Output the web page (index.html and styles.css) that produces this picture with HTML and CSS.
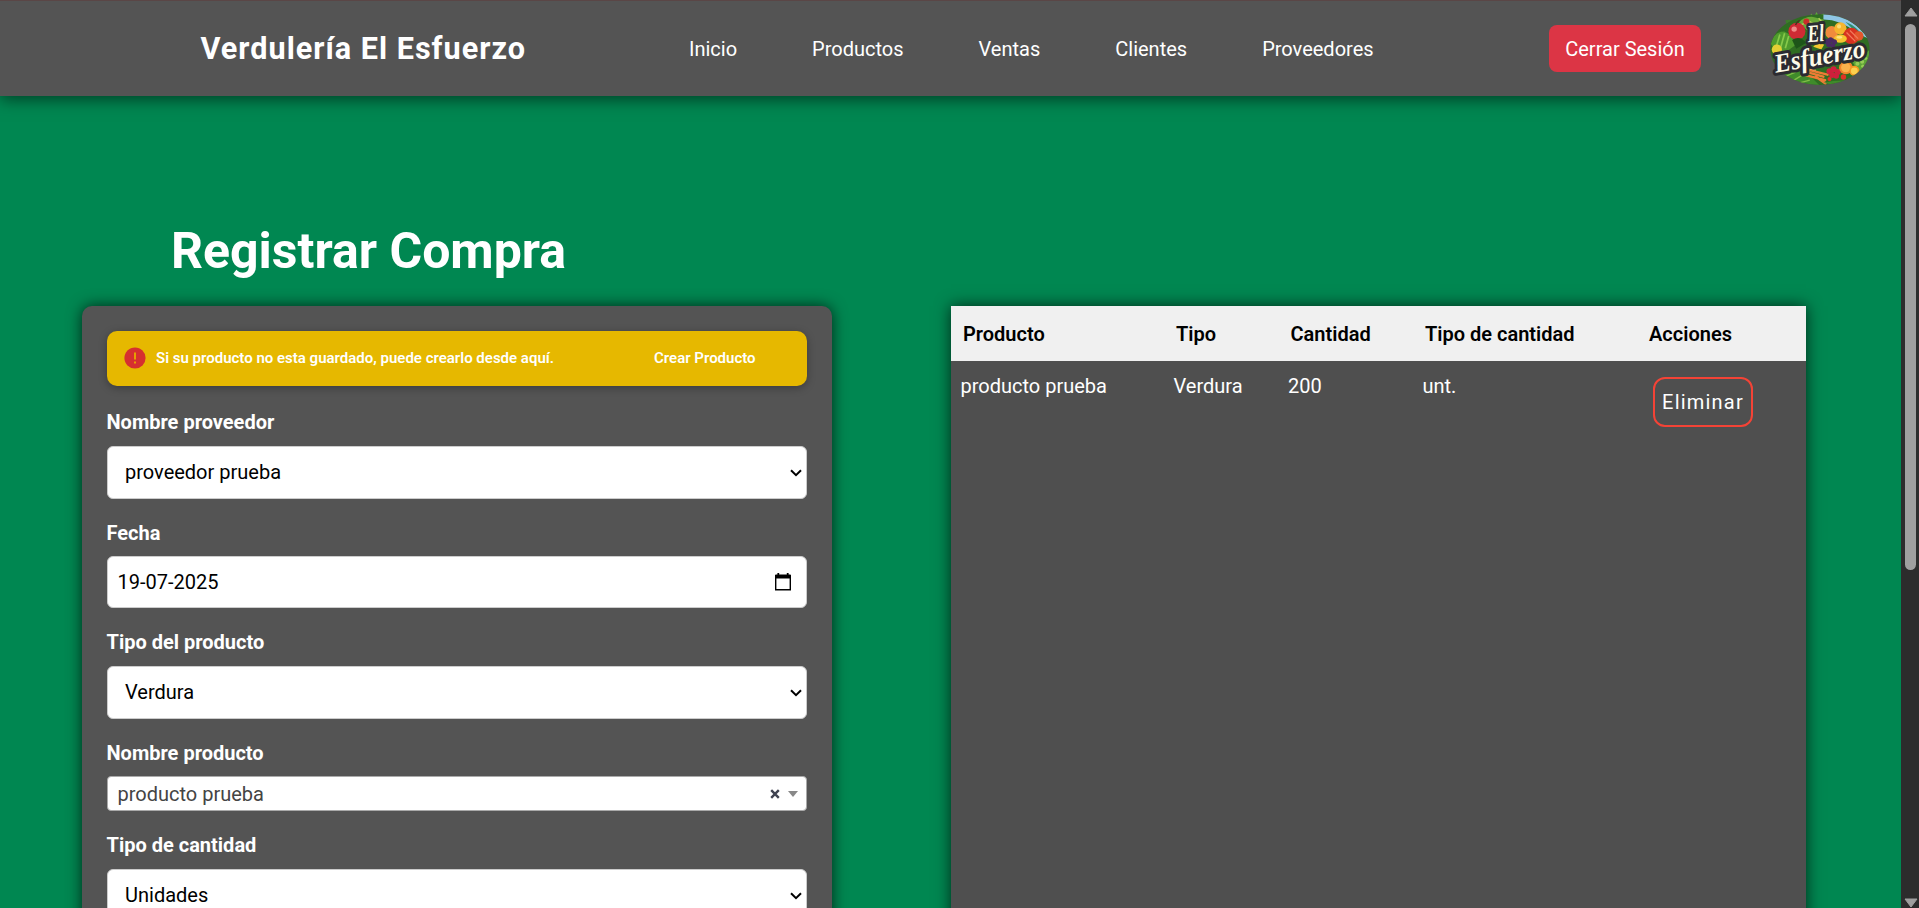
FILE: index.html
```html
<!DOCTYPE html>
<html lang="es">
<head>
<meta charset="utf-8">
<title>Verdulería El Esfuerzo</title>
<link rel="stylesheet" href="styles.css">
</head>
<body>
<div class="page">
  <header class="navbar">
    <div class="brand">Verdulería El Esfuerzo</div>
    <nav class="menu">
      <a>Inicio</a><a>Productos</a><a>Ventas</a><a>Clientes</a><a>Proveedores</a>
    </nav>
    <button class="logout">Cerrar Sesión</button>
    <svg class="logo" viewBox="30 35 300 220">
      <defs>
        <clipPath id="oval"><ellipse cx="180" cy="148" rx="146" ry="104"/></clipPath>
      </defs>
      <path d="M148 60 L154 42 L162 52 L170 38 L176 50 L190 42 L194 62Z" fill="#5fa83a"/>
      <path d="M78 62 Q95 56 108 70 L90 82 Q80 76 78 62Z" fill="#3d7d2c"/>
      <g clip-path="url(#oval)">
        <rect x="30" y="35" width="300" height="220" fill="#2f6d22"/>
        <path d="M190 40 Q270 45 320 115 L290 100 Q240 60 190 60Z" fill="#8fc6e6"/>
        <path d="M255 66 Q290 80 312 115 L280 92Z" fill="#2d8f6a"/>
        <path d="M35 130 Q45 95 75 95 Q100 105 108 135 L60 170Z" fill="#4f9b2d"/>
        <path d="M48 150 L62 104 M62 150 L76 100 M78 144 L88 108" stroke="#86c94a" stroke-width="5"/>
        <path d="M118 68 Q135 50 160 52 L190 60 L196 80 L140 90Z" fill="#69a938"/>
        <path d="M125 75 L150 66 M140 60 L160 72 M176 56 L188 70" stroke="#b4d45c" stroke-width="4"/>
        <circle cx="53" cy="148" r="15" fill="#e4cf34"/>
        <circle cx="140" cy="66" r="9" fill="#c92e2b"/>
        <circle cx="112" cy="94" r="25" fill="#cf2b34"/>
        <circle cx="104" cy="88" r="8" fill="#f08a86"/>
        <path d="M108 76 Q112 66 120 62" stroke="#49351f" stroke-width="4" fill="none"/>
        <path d="M98 120 Q120 105 140 128 L110 146Z" fill="#1d5419"/>
        <circle cx="214" cy="98" r="19" fill="#f08b3c"/>
        <circle cx="240" cy="86" r="18" fill="#f5b52e"/>
        <circle cx="236" cy="80" r="6" fill="#fbdc74"/>
        <circle cx="272" cy="108" r="24" fill="#d8321f"/>
        <circle cx="294" cy="108" r="14" fill="#e4562b"/>
        <path d="M258 98 L284 124 M268 92 L292 116" stroke="#f2785a" stroke-width="4"/>
        <ellipse cx="240" cy="116" rx="19" ry="12" fill="#f6c431"/>
        <ellipse cx="237" cy="112" rx="9" ry="4" fill="#fbe382"/>
        <g fill="#4a2a63"><circle cx="198" cy="124" r="8"/><circle cx="211" cy="120" r="8"/><circle cx="222" cy="126" r="8"/><circle cx="206" cy="133" r="8"/><circle cx="218" cy="137" r="7"/></g>
        <path d="M160 140 Q178 122 192 134 L184 148Z" fill="#f3c62e"/>
        <path d="M55 215 Q90 200 140 215 L180 255 H70Z" fill="#3f8b2a"/>
        <path d="M80 226 L110 214 M100 240 L130 222 M120 246 L150 238" stroke="#82bd48" stroke-width="4"/>
        <path d="M134 212 L190 228 M140 224 L195 238 M146 208 L202 222 M168 228 L196 248" stroke="#ee7b35" stroke-width="7" stroke-linecap="round"/>
        <path d="M132 209 L150 211 M150 206 L168 209" stroke="#f8a861" stroke-width="3"/>
        <g fill="#cf1f3c"><circle cx="208" cy="212" r="9"/><circle cx="220" cy="206" r="9"/><circle cx="232" cy="214" r="9"/><circle cx="216" cy="223" r="9"/><circle cx="228" cy="226" r="8"/></g>
        <circle cx="249" cy="229" r="8" fill="#e03226"/><circle cx="208" cy="235" r="6" fill="#e03226"/>
        <path d="M274 182 Q310 166 324 150 V210 H290Z" fill="#5da337"/>
        <g fill="#96cb55"><circle cx="290" cy="190" r="6"/><circle cx="304" cy="184" r="6"/><circle cx="314" cy="174" r="5"/><circle cx="306" cy="197" r="5"/></g>
        <path d="M190 246 Q230 236 270 240 L240 256Z" fill="#3f8b2a"/>
        <circle cx="256" cy="201" r="20" fill="#f2852b"/><circle cx="256" cy="201" r="14" fill="#fbb04b"/>
        <circle cx="281" cy="211" r="15" fill="#f59a23"/><circle cx="281" cy="211" r="10" fill="#fcd04e"/>
      </g>
      <g class="logo-text">
        <text x="143" y="125" font-size="72" textLength="50" lengthAdjust="spacingAndGlyphs" transform="rotate(-5 165 110)">El</text>
        <text x="45" y="193" font-size="78" textLength="270" lengthAdjust="spacingAndGlyphs" transform="rotate(-10 180 175)">Esfuerzo</text>
      </g>
    </svg>
  </header>

  <main class="content">
    <section class="left">
      <h1>Registrar Compra</h1>
      <form class="panel form">
        <div class="alert">
          <svg class="alert-icon" viewBox="0 0 22 22"><circle cx="11" cy="11" r="10.6" fill="#d6302f"/><path d="M11 5.6V12.4M11 14.4V16.6" stroke="#e6a000" stroke-width="2"/></svg>
          <span class="alert-text">Si su producto no esta guardado, puede crearlo desde aquí.</span>
          <a class="alert-link">Crear Producto</a>
        </div>
        <div class="field">
          <label>Nombre proveedor</label>
          <div class="control select"><span>proveedor prueba</span><svg class="chevron" viewBox="0 0 12 8"><path d="M1 1.2L6 6.2L11 1.2"/></svg></div>
        </div>
        <div class="field tight">
          <label>Fecha</label>
          <div class="control date"><span>19-07-2025</span><svg class="calendar" viewBox="0 0 16 18"><path d="M.7 3.5H15.3V16.8H.7Z" fill="none" stroke="#000" stroke-width="1.4"/><path d="M0 2.2Q0 1.4 1 1.4H2.4V0H4.2V1.4H11.8V0H13.6V1.4H15Q16 1.4 16 2.2V5.4H0Z"/></svg></div>
        </div>
        <div class="field">
          <label>Tipo del producto</label>
          <div class="control select"><span>Verdura</span><svg class="chevron" viewBox="0 0 12 8"><path d="M1 1.2L6 6.2L11 1.2"/></svg></div>
        </div>
        <div class="field tight">
          <label>Nombre producto</label>
          <div class="control search"><span>producto prueba</span><svg class="clear" viewBox="0 0 10 10"><path d="M1.2 1.2L8.8 8.8M8.8 1.2L1.2 8.8"/></svg><i class="caret"></i></div>
        </div>
        <div class="field">
          <label>Tipo de cantidad</label>
          <div class="control select"><span>Unidades</span><svg class="chevron" viewBox="0 0 12 8"><path d="M1 1.2L6 6.2L11 1.2"/></svg></div>
        </div>
      </form>
    </section>

    <section class="panel list">
      <div class="row head">
        <span>Producto</span><span>Tipo</span><span>Cantidad</span><span>Tipo de cantidad</span><span>Acciones</span>
      </div>
      <div class="row">
        <span>producto prueba</span><span>Verdura</span><span>200</span><span>unt.</span><button class="delete">Eliminar</button>
      </div>
    </section>
  </main>
</div>
<aside class="scrollbar">
  <svg class="arrow" viewBox="0 0 14 10"><path d="M7 1L13 9H1Z"/></svg>
  <div class="thumb"></div>
  <svg class="arrow down" viewBox="0 0 14 10"><path d="M7 9L13 1H1Z"/></svg>
</aside>
</body>
</html>
```

FILE: styles.css
```css
* { box-sizing: border-box; }

body {
  margin: 0;
  height: 908px;
  display: flex;
  overflow: hidden;
  font: 20px/24px Roboto, sans-serif;
  color: #fff;
  background: #008751;
}

.page {
  width: 1901px;
  height: 908px;
  overflow: hidden;
}

.navbar {
  display: flex;
  align-items: center;
  height: 96px;
  padding-left: 200.5px;
  background: #545454;
  border-top: 1px solid #5a4646;
  box-shadow: 0 4px 15px rgba(0, 0, 0, .5);
}

.brand {
  width: 488.5px;
  font-size: 30.6px;
  line-height: 36px;
  font-weight: 700;
  letter-spacing: 1px;
}

.menu {
  display: flex;
  gap: 75px;
  width: 860px;
}

.logout {
  width: 152px;
  height: 47px;
  padding: 0;
  border: 0;
  border-radius: 8px;
  background: #dc3545;
  color: #fff;
  font: inherit;
}

.logo {
  width: 102px;
  height: 75px;
  margin-left: 68px;
}

.logo-text {
  font-family: "Liberation Serif", serif;
  font-style: italic;
  font-weight: 700;
  fill: #fdfbe9;
  stroke: #2b2b31;
  stroke-width: 18px;
  stroke-linejoin: round;
  paint-order: stroke;
}

.content {
  display: flex;
  align-items: flex-start;
  padding-left: 82px;
}

.left { width: 750px; }

h1 {
  margin: 125px 0 0;
  padding-left: 89px;
  height: 85px;
  font-size: 50px;
  line-height: 60px;
  font-weight: 700;
}

.panel {
  height: 700px;
  box-shadow: 0 0 15px rgba(0, 0, 0, .7);
}

.form {
  padding: 25px;
  border-radius: 10px;
  background: #545454;
}

.alert {
  display: flex;
  align-items: center;
  height: 55px;
  padding: 0 0 1px 16.5px;
  margin-bottom: 24px;
  border-radius: 10px;
  background: #e6b800;
  box-shadow: 0 2px 8px rgba(0, 0, 0, .3);
  font-size: 15px;
  font-weight: 600;
}

.alert-icon {
  width: 22px;
  height: 22px;
  margin-right: 10.5px;
}

.alert-text { width: 498px; }

.field { margin-bottom: 22px; }

label {
  display: block;
  margin-bottom: 12px;
  margin-left: -.5px;
  font-weight: 700;
}

.tight label { margin-bottom: 11px; }

.control {
  display: flex;
  align-items: center;
  height: 53px;
  padding-left: 17px;
  border: 1px solid #ccc;
  border-radius: 6px;
  background: #fff;
  color: #000;
}

.control span { flex: 1; }

.select span { padding-bottom: 1px; }

.date { height: 52px; padding-left: 9.5px; }

.search {
  height: 35px;
  padding-left: 9.5px;
  border-color: #aaa;
  border-radius: 4px;
  color: #444;
}

.chevron {
  width: 12px;
  height: 8px;
  margin-right: 4px;
  fill: none;
  stroke: #000;
  stroke-width: 2;
}

.calendar {
  width: 16px;
  height: 18px;
  margin-right: 15px;
}

.clear {
  width: 10px;
  height: 10px;
  margin-right: 8px;
  stroke: #3f4250;
  stroke-width: 2.4;
}

.caret {
  margin-right: 8px;
  border: 5px solid transparent;
  border-top: 6px solid #888;
  border-bottom: 0;
}

.list {
  width: 855px;
  margin: 210px 0 0 119px;
  background: #4f4f4f;
}

.row {
  display: grid;
  grid-template-columns: 213px 114.5px 134.5px 230.5px 1fr;
  padding: 13px 0 0 9.5px;
}

.head {
  height: 55px;
  padding: 16px 0 0 12px;
  background: #f0f0f0;
  color: #000;
  font-weight: 600;
}

.head span:last-child { margin-left: -6.5px; }

.delete {
  width: 100px;
  height: 50px;
  margin-top: 3px;
  padding: 0;
  border: 2px solid #f44336;
  border-radius: 12px;
  background: transparent;
  color: #fff;
  font: inherit;
  letter-spacing: 1.2px;
}

.scrollbar {
  display: flex;
  flex-direction: column;
  align-items: center;
  width: 18px;
  height: 908px;
  padding: 7px 0 0 1px;
  background: #2c2c2c;
}

.arrow {
  width: 14px;
  height: 10px;
  fill: #9f9f9f;
  stroke: #9f9f9f;
  stroke-linejoin: round;
}

.thumb {
  width: 11px;
  height: 546px;
  margin-top: 7px;
  border-radius: 6px;
  background: #9f9f9f;
}

.down { margin-top: auto; }
```
